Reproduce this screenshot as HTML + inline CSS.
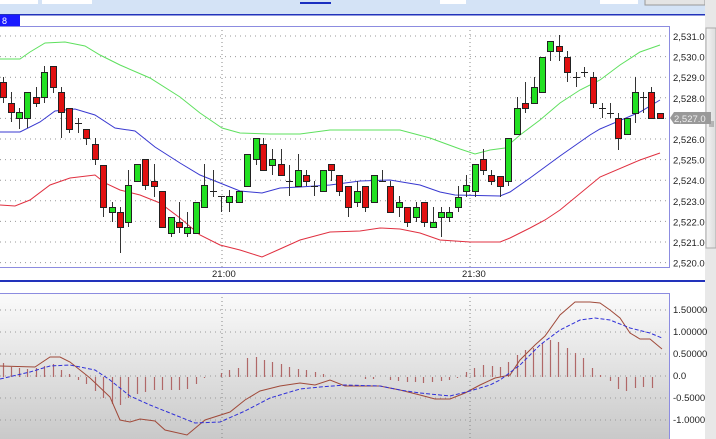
<!DOCTYPE html>
<html><head><meta charset="utf-8"><style>
html,body{margin:0;padding:0;width:716px;height:439px;overflow:hidden;background:#fff;font-family:"Liberation Sans",sans-serif}
svg{position:absolute;left:0;top:0}
</style></head><body>
<svg id="s" width="716" height="439" xmlns="http://www.w3.org/2000/svg">
<defs>
<linearGradient id="g" x1="0" y1="0" x2="0" y2="1"><stop offset="0" stop-color="#fbfbfb"/><stop offset="1" stop-color="#c9c9c9"/></linearGradient>
<linearGradient id="sb" x1="0" y1="0" x2="1" y2="0"><stop offset="0" stop-color="#f4f4f4"/><stop offset="1" stop-color="#dcdcdc"/></linearGradient>
</defs>
<rect x="0" y="0" width="716" height="14" fill="#d4e3f6"/>
<rect x="0" y="0" width="38" height="4" fill="#fff"/>
<rect x="42" y="0" width="50" height="4" fill="#fff"/>
<rect x="300" y="2" width="31" height="2" fill="#1a2fc0"/>
<rect x="440" y="0" width="26" height="4" fill="#fff"/>
<rect x="600" y="0" width="38" height="4" fill="#fff"/>
<rect x="645" y="-1" width="60" height="6" fill="#e4e4e4" stroke="#999"/>
<rect x="0" y="14" width="705" height="1.5" fill="#2233bb"/>
<rect x="0" y="15" width="20" height="11" fill="#1a1aff"/>
<text x="2" y="24" font-size="9" fill="#fff">8</text>
<rect x="0" y="280" width="705" height="2" fill="#2233bb"/>
<rect x="0" y="293" width="669" height="146" fill="url(#g)"/>
<rect x="669" y="282" width="36" height="157" fill="#fff"/>
<rect x="705" y="0" width="11" height="439" fill="#e8e8e8"/>
<rect x="706" y="28" width="10" height="220" fill="url(#sb)" stroke="#aaa" stroke-width="1"/>
<path d="M709 122h5M709 124h5M709 126h5" stroke="#666" stroke-width="0.8"/>
<g id="dyn"></g>
</svg>
<script>
var d=[];
function P(s){d.push(s);}
for(var i=0;i<=11;i++){var y=36+i*20.6;P('<line x1="0" y1="'+y+'" x2="668" y2="'+y+'" stroke="#999" stroke-dasharray="1 4"/>');
P('<text x="673" y="'+(y+4)+'" font-size="9.5" fill="#222">2,'+(531-i)+'.0</text>');}
[222,470].forEach(function(x){P('<line x1="'+x+'" y1="26" x2="'+x+'" y2="267" stroke="#888" stroke-dasharray="1 3"/>');
P('<line x1="'+x+'" y1="293" x2="'+x+'" y2="439" stroke="#888" stroke-dasharray="1 3"/>');});
P('<text x="212" y="277" font-size="9.5" fill="#222">21:00</text><text x="462" y="277" font-size="9.5" fill="#222">21:30</text>');
P('<line x1="0" y1="267.5" x2="669" y2="267.5" stroke="#8c8ce0"/><line x1="0" y1="26.5" x2="669.5" y2="26.5" stroke="#8c8ce0"/><line x1="669.5" y1="26" x2="669.5" y2="268" stroke="#8c8ce0"/>');
function pl(pts,c,extra){P('<polyline fill="none" stroke="'+c+'" stroke-width="1" '+(extra||'')+' points="'+pts.map(function(p){return p.join(',')}).join(' ')+'"/>');}
pl([[0,59],[20,59],[30,52],[45,43],[65,42],[85,46],[100,55],[120,65],[150,78],[180,97],[200,113],[222,128],[240,133],[270,134],[300,134],[330,130],[400,130],[430,138],[460,149],[475,154],[490,150],[505,148],[520,135],[540,120],[560,103],[580,90],[600,80],[620,65],[640,52],[660,45]],'#5ee05e');
pl([[0,132],[20,132],[40,122],[55,111],[75,109],[95,115],[115,128],[135,131],[155,147],[180,163],[200,175],[220,183],[240,191],[262,193],[280,188],[300,187],[330,185],[360,181],[390,180],[420,185],[440,192],[455,195],[500,196],[510,192],[530,178],[560,156],[590,135],[600,129],[640,112],[660,100]],'#3838d0');
pl([[0,205],[15,206],[30,200],[50,185],[70,178],[95,175],[105,183],[120,190],[140,195],[160,203],[180,218],[200,235],[220,245],[240,250],[262,257],[280,249],[300,240],[330,232],[360,231],[380,228],[400,229],[420,233],[440,240],[470,242],[500,242],[510,238],[530,228],[545,220],[560,210],[600,177],[640,160],[660,153]],'#e03040');
var C=[[3,82,97,77,103],[11,103,112,92,122],[19,118,112,108,129],[27,118,92,92,128],[36,97,103,87,107],[44,97,72,66,103],[53,66,87,66,93],[61,92,112,87,138],[69,108,129,108,133],[78,123,123,118,133],[86,129,138,129,145],[95,144,159,138,165],[103,165,207,165,217],[112,212,207,202,222],[120,212,227,207,253],[128,222,185,170,227],[137,181,164,164,181],[145,159,185,159,190],[154,181,186,164,197],[162,191,227,191,227],[171,233,217,217,237],[179,222,227,202,233],[187,233,227,212,237],[196,233,202,202,233],[204,207,185,164,207],[213,191,191,170,197],[221,196,196,196,212],[229,202,196,190,212],[239,202,191,191,202],[247,186,154,154,186],[256,159,138,138,165],[263,144,170,138,170],[272,165,159,149,175],[281,164,175,149,175],[289,181,181,165,196],[298,186,170,154,186],[306,175,181,170,186],[314,186,186,181,196],[323,191,170,170,191],[331,164,170,164,181],[339,175,191,175,196],[348,186,207,186,217],[357,202,191,181,207],[365,186,207,186,212],[374,202,175,175,202],[382,181,181,170,181],[390,186,212,181,212],[399,207,202,196,217],[407,207,222,207,227],[416,217,207,202,222],[424,202,222,202,227],[433,227,222,207,227],[441,217,212,207,237],[449,217,212,207,222],[458,207,197,186,212],[466,191,185,175,197],[475,191,164,164,197],[483,159,170,149,175],[491,175,181,170,185],[500,176,186,176,197],[508,181,138,138,186],[517,134,108,97,134],[525,103,108,82,113],[534,103,87,77,103],[542,92,57,57,92],[550,51,41,41,61],[559,46,51,35,61],[567,57,72,51,82],[576,77,77,72,87],[584,72,72,67,77],[593,77,103,72,108],[602,108,108,103,118],[610,113,113,103,118],[618,118,138,113,150],[627,134,118,118,134],[635,113,92,77,123],[643,97,97,92,113],[651,92,118,87,118],[660,113,118,113,118]];
C.forEach(function(c){var x=c[0],o=c[1],cl=c[2],h=c[3],l=c[4];
P('<line x1="'+(x+.5)+'" y1="'+h+'" x2="'+(x+.5)+'" y2="'+l+'" stroke="#333"/>');
if(o==cl){P('<line x1="'+(x-3)+'" y1="'+(o+.5)+'" x2="'+(x+4)+'" y2="'+(o+.5)+'" stroke="#222"/>');}
else{var t=Math.min(o,cl),b=Math.max(o,cl);P('<rect x="'+(x-2.5)+'" y="'+(t+.5)+'" width="6" height="'+(b-t)+'" fill="'+(cl<o?'#22e022':'#e01010')+'" stroke="#222" stroke-width="1"/>');}
});
P('<path d="M670 118 L674 112 H711 V124 H674 Z" fill="#999"/><text x="674" y="122" font-size="9.5" fill="#eee">2,527.0</text>');
var lv=[[310,'1.50000'],[332,'1.00000'],[354,'0.50000'],[376,'0.0'],[398,'-0.5000'],[420,'-1.0000']];
lv.forEach(function(a){P('<line x1="0" y1="'+a[0]+'" x2="668" y2="'+a[0]+'" stroke="#999" stroke-dasharray="1 4"/><text x="673" y="'+(a[0]+3)+'" font-size="9.5" fill="#222">'+a[1]+'</text>');});
P('<line x1="0" y1="293.5" x2="669" y2="293.5" stroke="#8c8ce0"/><line x1="669.5" y1="293" x2="669.5" y2="439" stroke="#8c8ce0"/>');
var H=[[3,363],[11,367],[19,368],[27,369],[36,368],[44,366],[53,364],[61,370],[69,374],[78,380],[86,384],[95,391],[103,398],[112,404],[120,405],[128,398],[137,394],[145,392],[154,390],[162,390],[171,390],[179,390],[187,389],[196,384],[204,378],[221,373],[229,370],[238,368],[247,358],[256,357],[264,360],[272,362],[281,364],[289,367],[298,369],[306,370],[315,372],[323,374],[331,377],[365,379],[373,379],[390,380],[398,381],[407,382],[415,382],[423,383],[432,382],[441,381],[449,380],[457,378],[466,372],[474,368],[483,365],[492,366],[500,367],[508,362],[517,355],[525,350],[533,348],[542,343],[550,340],[558,342],[567,348],[575,353],[583,358],[592,368],[600,375],[610,381],[618,389],[626,391],[635,388],[643,387],[652,388]];
H.forEach(function(h){P('<line x1="'+(h[0]+.5)+'" y1="377" x2="'+(h[0]+.5)+'" y2="'+h[1]+'" stroke="#b06868" stroke-width="1.2"/>');});
pl([[0,366],[35,367],[50,357],[60,357],[70,362],[90,378],[110,397],[120,420],[130,422],[140,419],[155,421],[165,430],[187,435],[205,420],[230,412],[245,400],[260,391],[280,386],[300,383],[315,385],[330,380],[345,386],[380,386],[400,390],[420,395],[435,399],[450,399],[465,393],[480,385],[495,378],[510,375],[520,360],[535,345],[545,336],[560,315],[575,302],[590,302],[600,303],[610,310],[620,318],[630,333],[640,339],[650,339],[662,349]],'#a04a3a');
pl([[0,379],[30,372],[50,366],[70,365],[95,370],[110,380],[130,396],[150,405],[175,415],[195,423],[220,422],[245,411],[270,398],[300,389],[320,387],[345,385],[380,386],[400,390],[420,393],[450,396],[470,391],[490,385],[500,380],[520,365],[540,345],[560,330],[580,320],[595,318],[610,320],[630,328],[650,333],[662,338]],'#3030d8','stroke-dasharray="4 2" stroke-width="1.2"');
document.getElementById('dyn').innerHTML=d.join('');
</script>
</body></html>
